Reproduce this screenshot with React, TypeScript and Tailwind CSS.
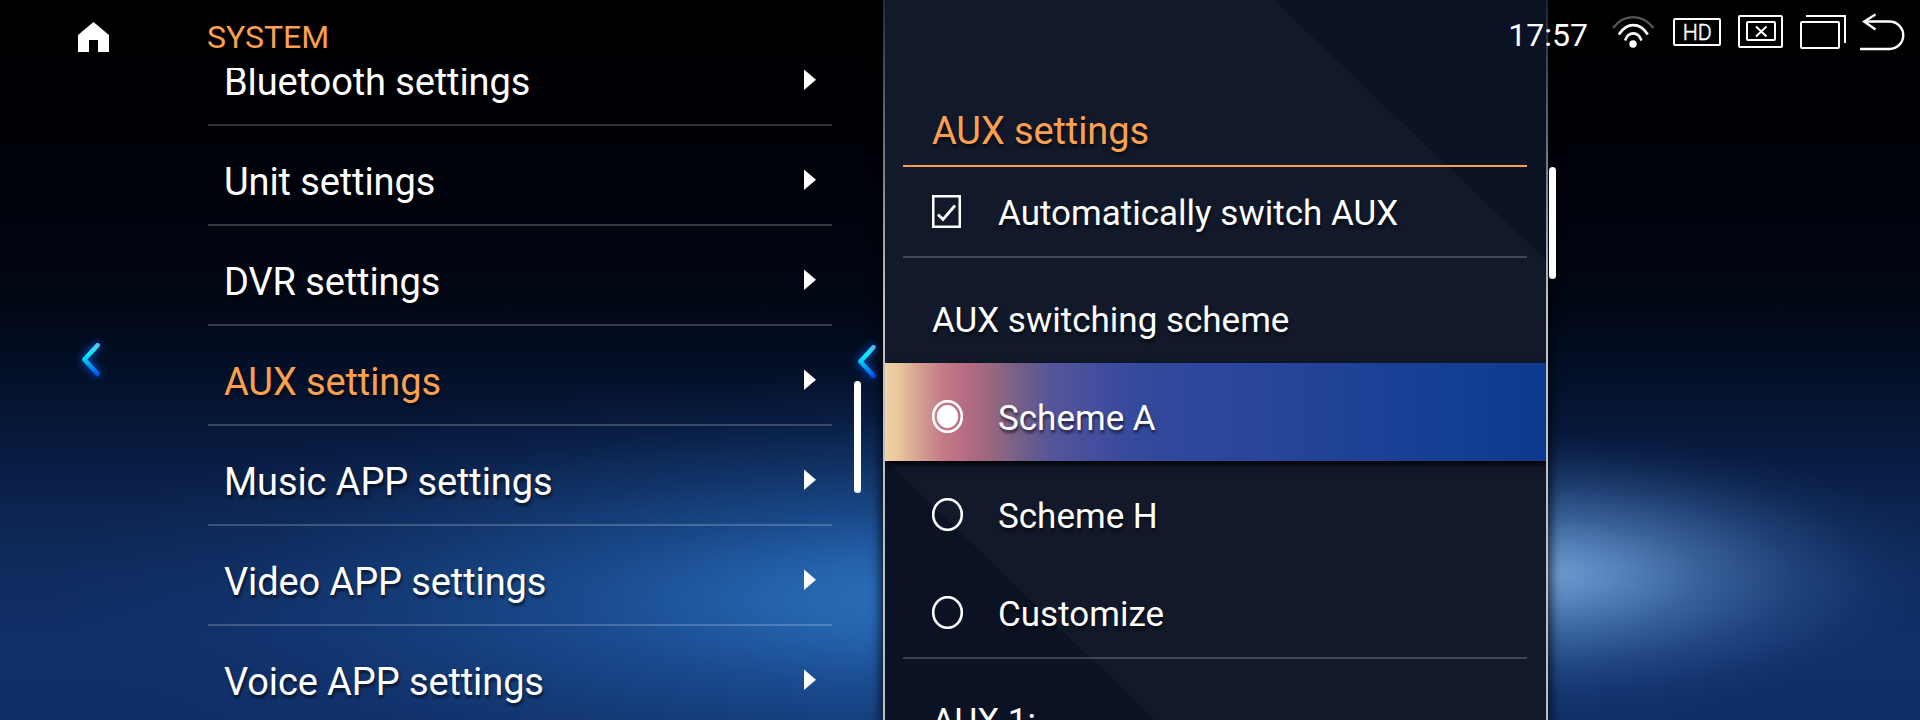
import React from "react";

const leftItems = [
  "Bluetooth settings",
  "Unit settings",
  "DVR settings",
  "AUX settings",
  "Music APP settings",
  "Video APP settings",
  "Voice APP settings",
];

function Backdrop() {
  return (
    <div className="absolute inset-0 bg-[linear-gradient(180deg,#000000_0px,#00020a_180px,#010714_300px,#04112b_380px,#081b40_450px,#0c2450_510px,#0f2c60_580px,#112f68_640px,#102e66_720px)]">
      <div className="absolute inset-0 bg-[radial-gradient(ellipse_900px_225px_at_950px_598px,rgba(50,124,202,0.88)_0%,rgba(42,114,194,0.76)_20%,rgba(35,100,178,0.55)_40%,rgba(29,88,160,0.34)_60%,rgba(24,72,140,0.13)_80%,rgba(20,60,120,0)_100%)]" />
      <div className="absolute inset-0 bg-[radial-gradient(ellipse_400px_140px_at_1535px_574px,rgba(125,170,222,0.9)_0%,rgba(112,160,216,0.74)_20%,rgba(95,146,205,0.5)_42%,rgba(78,128,192,0.26)_65%,rgba(60,110,180,0.08)_85%,rgba(50,100,170,0)_100%)]" />
    </div>
  );
}

function BackChevron() {
  return (
    <svg width="36" height="52" viewBox="0 0 36 52" fill="none" className="overflow-visible drop-shadow-[0_0_4px_#0060ff]">
      <defs>
        <linearGradient id="chev" x1="0" y1="10" x2="0" y2="43" gradientUnits="userSpaceOnUse">
          <stop offset="0" stopColor="#6cb8ff" />
          <stop offset="0.32" stopColor="#00f4ee" />
          <stop offset="0.6" stopColor="#00b4f8" />
          <stop offset="1" stopColor="#0048f4" />
        </linearGradient>
      </defs>
      <path d="M26.500 12.300 L13.400 26.500 L26.500 41" stroke="url(#chev)" strokeWidth="4.600" strokeLinecap="round" strokeLinejoin="round" />
    </svg>
  );
}

function MenuRow({ label, active }: { label: string; active: boolean }) {
  return (
    <div className="flex h-[100px] shrink-0 items-center justify-between border-b-2 border-white/20 px-4">
      <span
        className={`whitespace-nowrap pt-[13px] text-[38px] leading-[44px] tracking-[-0.1px] [text-shadow:1px_3px_3px_rgba(0,0,0,0.6)] ${
          active ? "text-[#fca050]" : "text-white"
        }`}
      >
        {label}
      </span>
      <svg className="mt-[9px]" width="12" height="22" viewBox="0 0 12 22" fill="#fff">
        <path d="M0 0.500 L12 10.700 L0 21Z" />
      </svg>
    </div>
  );
}

function Radio({ checked }: { checked: boolean }) {
  return (
    <svg className="mt-[9px]" width="31" height="33" viewBox="0 0 31 33" fill="none">
      <ellipse cx="15.500" cy="16.500" rx="14.300" ry="15.300" stroke="#fff" strokeWidth="2.600" />
      {checked && <ellipse cx="15.500" cy="16.500" rx="10.600" ry="11.400" fill="#fff" />}
    </svg>
  );
}

function SchemeRow({ label, checked }: { label: string; checked: boolean }) {
  return (
    <div
      className={`flex h-[98px] shrink-0 items-center pl-[47px] ${
        checked
          ? "relative shadow-[0_4px_6px_rgba(0,0,0,0.85)] bg-[linear-gradient(90deg,#f1d3a4_0px,#e9c99e_12px,#d2a090_35px,#c47a86_58px,#b76c84_80px,#996880_105px,#745f88_135px,#56559a_165px,#434e9e_210px,#334a9c_255px,#2d479d_320px,#26449a_400px,#1e4196_470px,#143f94_560px,#0b398e_661px)]"
          : ""
      }`}
    >
      <Radio checked={checked} />
      <span className="ml-[35px] pt-[14px] text-[35px] leading-[42px] [text-shadow:1px_3px_3px_rgba(0,0,0,0.6)]">{label}</span>
    </div>
  );
}

function StatusBar() {
  return (
    <div className="absolute right-0 top-0 flex h-16 items-start">
      <span className="mr-5 mt-[15px] text-[32px] leading-[40px]">17:57</span>
      <svg width="312" height="64" viewBox="1608 0 312 64" fill="none" stroke="#fff" strokeWidth="2">
        <path d="M1613 28 C1624 13.500 1642 13.500 1653.500 28" stroke="#555" strokeWidth="2.400" />
        <path d="M1618.800 34.500 C1627 22 1640 22 1647.800 34.500" strokeWidth="2.600" />
        <path d="M1625 40.500 C1628.500 31 1638 31 1641.500 40.500" strokeWidth="2.600" />
        <circle cx="1633" cy="44" r="3.700" fill="#fff" stroke="none" />
        <rect x="1674" y="19" width="46" height="26" rx="1" />
        <text x="1697.300" y="40" textAnchor="middle" fill="#fff" stroke="#fff" strokeWidth="0.500" fontSize="22.500" fontWeight="300" textLength="29" lengthAdjust="spacingAndGlyphs" fontFamily="Roboto, sans-serif">
          HD
        </text>
        <rect x="1739" y="16" width="43" height="31" rx="1" />
        <rect x="1747" y="22" width="28" height="18" rx="1" />
        <path d="M1756 26.500 L1766.500 36.500 M1766.500 26.500 L1756 36.500" />
        <rect x="1801" y="22" width="38" height="26" rx="1" />
        <path d="M1806 16 H1845 V43" />
        <path d="M1860 49 H1889.500 A13.700 13.700 0 0 0 1889.500 21.500 H1865 M1875.500 14.500 L1864.200 21.500 L1875.500 29.500" strokeWidth="2.400" />
      </svg>
    </div>
  );
}

export default function App() {
  return (
    <div className="relative flex h-[720px] w-[1920px] overflow-hidden bg-black text-white [font-family:Roboto,sans-serif]">
      <Backdrop />

      <nav className="relative flex w-[208px] shrink-0 flex-col">
        <svg className="ml-[78px] mt-[22px]" width="31" height="30" viewBox="0 0 31 30" fill="#fff">
          <path d="M15.500 0 L31 13 V30 H20 V18 H11 V30 H0 V13Z" />
        </svg>
        <div className="ml-[71px] mt-[281px]">
          <BackChevron />
        </div>
      </nav>

      <section className="relative flex w-[624px] shrink-0 flex-col">
        <h1 className="-ml-px flex h-[68px] shrink-0 items-end pb-[11px] text-[32px] leading-[40px] text-[#fca050]">SYSTEM</h1>
        <div className="flex min-h-0 flex-1 flex-col overflow-hidden">
          <div className="-mt-[42px] flex flex-col">
            {leftItems.map((label) => (
              <MenuRow key={label} label={label} active={label === "AUX settings"} />
            ))}
          </div>
        </div>
      </section>

      <div className="relative flex w-[51px] shrink-0 flex-col">
        <div className="ml-[15px] mt-[335px]">
          <BackChevron />
        </div>
        <div className="-mt-1.5 ml-[22px] h-[112px] w-[7px] rounded-full bg-white" />
      </div>

      <main className="relative flex w-[665px] shrink-0 bg-[#11192a] shadow-[0_0_10px_3px_rgba(0,0,0,0.7)]">
        <svg className="absolute inset-0" width="665" height="720" fill="#0a1224">
          <path d="M391 0 H665 V262Z M0 458 L272 720 H0Z" />
        </svg>
        <div className="relative w-0.5 bg-[linear-gradient(180deg,rgba(190,190,195,0.1),rgba(190,190,195,1)_300px)]" />
        <div className="relative flex flex-1 flex-col overflow-hidden">
          <div className="ml-[18px] mr-[19px] flex h-[167px] shrink-0 items-end border-b-2 border-[#fca050] pb-3 pl-[29px] text-[38px] leading-[44px] tracking-[-0.1px] text-[#fca050]">
            <span className="[text-shadow:1px_3px_3px_rgba(0,0,0,0.6)]">AUX settings</span>
          </div>
          <div className="ml-[18px] mr-[19px] flex h-[91px] shrink-0 items-center border-b-2 border-white/20 pl-[29px]">
            <svg width="29" height="33" viewBox="0 0 29 33" fill="none" stroke="#fff">
              <rect x="1.250" y="1.250" width="26.500" height="30.500" strokeWidth="2.500" />
              <path d="M6 19.500 L11 24.500 L23 10.500" strokeWidth="2.800" />
            </svg>
            <span className="ml-[37px] pt-[5px] text-[35px] leading-[42px] [text-shadow:1px_3px_3px_rgba(0,0,0,0.6)]">
              Automatically switch AUX
            </span>
          </div>
          <div className="flex h-[105px] shrink-0 items-end pb-[21px] pl-[47px] text-[35px] leading-[42px]">
            <span className="[text-shadow:1px_3px_3px_rgba(0,0,0,0.6)]">AUX switching scheme</span>
          </div>
          <SchemeRow label="Scheme A" checked />
          <SchemeRow label="Scheme H" checked={false} />
          <SchemeRow label="Customize" checked={false} />
          <div className="ml-[18px] mr-[19px] h-0.5 shrink-0 bg-white/20" />
          <div className="shrink-0 pl-[47px] pt-[42px] text-[35px] leading-[42px]">AUX 1:</div>
        </div>
        <div className="relative w-0.5 bg-[linear-gradient(180deg,rgba(190,190,195,0.1),rgba(190,190,195,1)_300px)]" />
      </main>

      <div className="relative flex-1">
        <div className="ml-px mt-[167px] h-[112px] w-[7px] rounded-full bg-white" />
      </div>

      <StatusBar />
    </div>
  );
}
